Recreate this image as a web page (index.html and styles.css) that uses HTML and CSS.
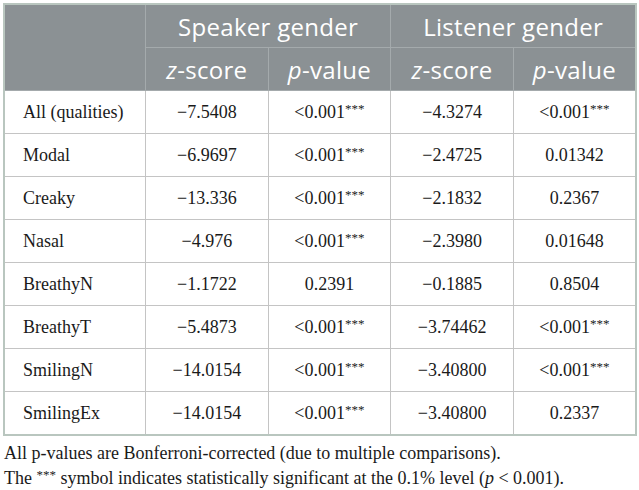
FILE: index.html
```html
<!DOCTYPE html>
<html>
<head>
    <link rel="stylesheet" href="styles.css">
</head>
<body>
    <div class="wrap">
        <table class="results">
            <thead>
                <tr>
                    <th class="blank" rowspan="2"></th>
                    <th colspan="2">Speaker gender</th>
                    <th colspan="2">Listener gender</th>
                </tr>
                <tr>
                    <th><i>z</i>-score</th>
                    <th><i>p</i>-value</th>
                    <th><i>z</i>-score</th>
                    <th><i>p</i>-value</th>
                </tr>
            </thead>
            <tbody>
                <tr><td>All (qualities)</td><td>−7.5408</td><td>&lt;0.001<sup>***</sup></td><td>−4.3274</td><td>&lt;0.001<sup>***</sup></td></tr>
                <tr><td>Modal</td><td>−6.9697</td><td>&lt;0.001<sup>***</sup></td><td>−2.4725</td><td>0.01342</td></tr>
                <tr><td>Creaky</td><td>−13.336</td><td>&lt;0.001<sup>***</sup></td><td>−2.1832</td><td>0.2367</td></tr>
                <tr><td>Nasal</td><td>−4.976</td><td>&lt;0.001<sup>***</sup></td><td>−2.3980</td><td>0.01648</td></tr>
                <tr><td>BreathyN</td><td>−1.1722</td><td>0.2391</td><td>−0.1885</td><td>0.8504</td></tr>
                <tr><td>BreathyT</td><td>−5.4873</td><td>&lt;0.001<sup>***</sup></td><td>−3.74462</td><td>&lt;0.001<sup>***</sup></td></tr>
                <tr><td>SmilingN</td><td>−14.0154</td><td>&lt;0.001<sup>***</sup></td><td>−3.40800</td><td>&lt;0.001<sup>***</sup></td></tr>
                <tr><td>SmilingEx</td><td>−14.0154</td><td>&lt;0.001<sup>***</sup></td><td>−3.40800</td><td>0.2337</td></tr>
            </tbody>
        </table>
        <div class="notes">
            <p>All p-values are Bonferroni-corrected (due to multiple comparisons).</p>
            <p>The <sup>***</sup> symbol indicates statistically significant at the 0.1% level (<i>p</i> &lt; 0.001).</p>
        </div>
    </div>
</body>
</html>
```

FILE: styles.css
```css
body {
    margin: 0;
    padding: 3px 2px 0 3px;
    background: #ffffff;
    font-family: "Liberation Serif", serif;
    color: #1a1a1a;
}

.results {
    border-collapse: collapse;
    width: 634px;
    border: 2px solid #b9c6bf;
    table-layout: fixed;
}

.results th {
    background-color: #8b9194;
    color: #ffffff;
    font-family: "Open Sans", sans-serif;
    font-weight: normal;
    font-size: 24px;
    letter-spacing: 0.3px;
    height: 42px;
    padding: 0;
    border: 1px solid #a4aaac;
    text-align: center;
}

.results th.blank {
    width: 140px;
}

.results td {
    font-size: 18px;
    height: 42px;
    padding: 0;
    border: 1px solid #c4c4c4;
    text-align: center;
}

.results td:first-child {
    text-align: left;
    padding-left: 18px;
}

.results sup,
.notes sup {
    font-size: 13px;
    vertical-align: 5px;
    line-height: 0;
}

.notes {
    padding-top: 5px;
    padding-left: 1px;
}

.notes p {
    margin: 0;
    font-size: 18px;
    line-height: 25px;
}
```
